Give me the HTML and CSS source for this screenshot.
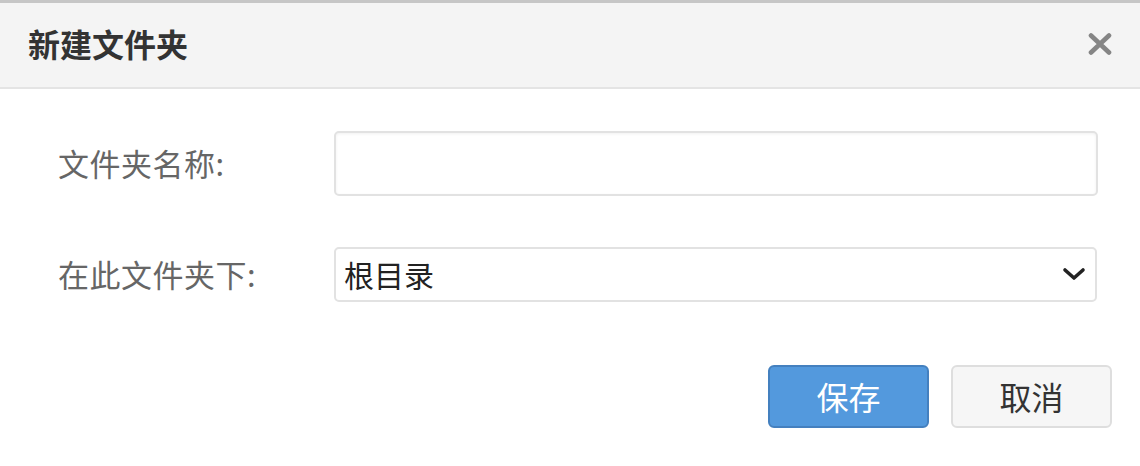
FILE: index.html
```html
<!DOCTYPE html>
<html lang="zh-CN">
<head>
<meta charset="utf-8">
<title>新建文件夹</title>
<link rel="stylesheet" href="styles.css">
</head>
<body>
<div class="dialog">
  <div class="header">
    <h1 class="title">新建文件夹</h1>
    <button class="close" type="button" aria-label="关闭">
      <svg width="26" height="22" viewBox="0 0 26 22"><path d="M4 2.5 L22 19.5 M22 2.5 L4 19.5" stroke="#858585" stroke-width="4.6" stroke-linecap="round" fill="none"/></svg>
    </button>
  </div>
  <div class="body">
    <div class="row row-name">
      <label class="label" for="fname">文件夹名称:</label>
      <input id="fname" class="input" type="text">
    </div>
    <div class="row row-parent">
      <label class="label" for="parent">在此文件夹下:</label>
      <div class="select-wrap">
        <select id="parent" class="select"><option>根目录</option></select>
        <svg class="chevron" width="24" height="14" viewBox="0 0 24 14"><path d="M3 3 L12 11 L21 3" stroke="#222" stroke-width="3.6" stroke-linecap="round" stroke-linejoin="round" fill="none"/></svg>
      </div>
    </div>
    <div class="footer">
      <button class="btn btn-primary" type="button">保存</button>
      <button class="btn btn-default" type="button">取消</button>
    </div>
  </div>
</div>
</body>
</html>
```
FILE: styles.css
```css
* { box-sizing: border-box; }
html, body { margin: 0; padding: 0; background: #fff; }
body {
  font-family: "Noto Sans CJK SC", "Noto Sans", "Liberation Sans", sans-serif;
  width: 1140px;
  height: 466px;
  overflow: hidden;
}
.dialog {
  border-top: 3px solid #c6c6c6;
}
.header {
  height: 86px;
  background: #f4f4f4;
  border-bottom: 2px solid #e4e4e4;
  display: flex;
  align-items: center;
  justify-content: space-between;
  padding: 0 27px 0 28px;
}
.title {
  margin: 0;
  font-size: 32px;
  font-weight: 700;
  color: #333;
  line-height: 1;
  padding-bottom: 4px;
}
.close {
  border: 0;
  background: transparent;
  padding: 0;
  width: 26px;
  height: 22px;
  display: flex;
  margin-bottom: 3px;
}
.body {
  padding: 42px 28px 0 58px;
}
.row {
  display: flex;
  align-items: center;
  margin-right: 14px;
}
.row-name { height: 65px; }
.row-parent { height: 55px; margin-top: 51px; }
.label {
  width: 276px;
  flex: none;
  font-size: 31px;
  color: #666;
  line-height: 1;
  padding-bottom: 2px;
  letter-spacing: 0.5px;
}
.input {
  flex: 1;
  height: 65px;
  border: 2px solid #e2e2e2;
  border-radius: 5px;
  box-shadow: inset 0 1px 3px rgba(0,0,0,0.06);
  background: #fff;
  font-size: 30px;
  padding: 0 12px;
}
.select-wrap {
  flex: 1;
  position: relative;
  height: 55px;
  margin-right: 1px;
}
.select {
  -webkit-appearance: none;
  appearance: none;
  width: 100%;
  height: 55px;
  border: 2px solid #e2e2e2;
  border-radius: 5px;
  background: #fff;
  font-family: inherit;
  font-size: 30px;
  color: #222;
  padding: 0 0 2px 8px;
}
.chevron {
  position: absolute;
  right: 11px;
  top: 20px;
  pointer-events: none;
}
.footer {
  display: flex;
  justify-content: flex-end;
  gap: 22px;
  margin-top: 63px;
}
.btn {
  width: 161px;
  height: 63px;
  border-radius: 6px;
  font-family: inherit;
  font-size: 32px;
  line-height: 1;
  padding: 0 0 2px;
}
.btn-primary {
  background: #5399dd;
  border: 2px solid #4480bf;
  color: #fff;
}
.btn-default {
  background: #f6f6f6;
  border: 2px solid #dedede;
  color: #333;
}
```
